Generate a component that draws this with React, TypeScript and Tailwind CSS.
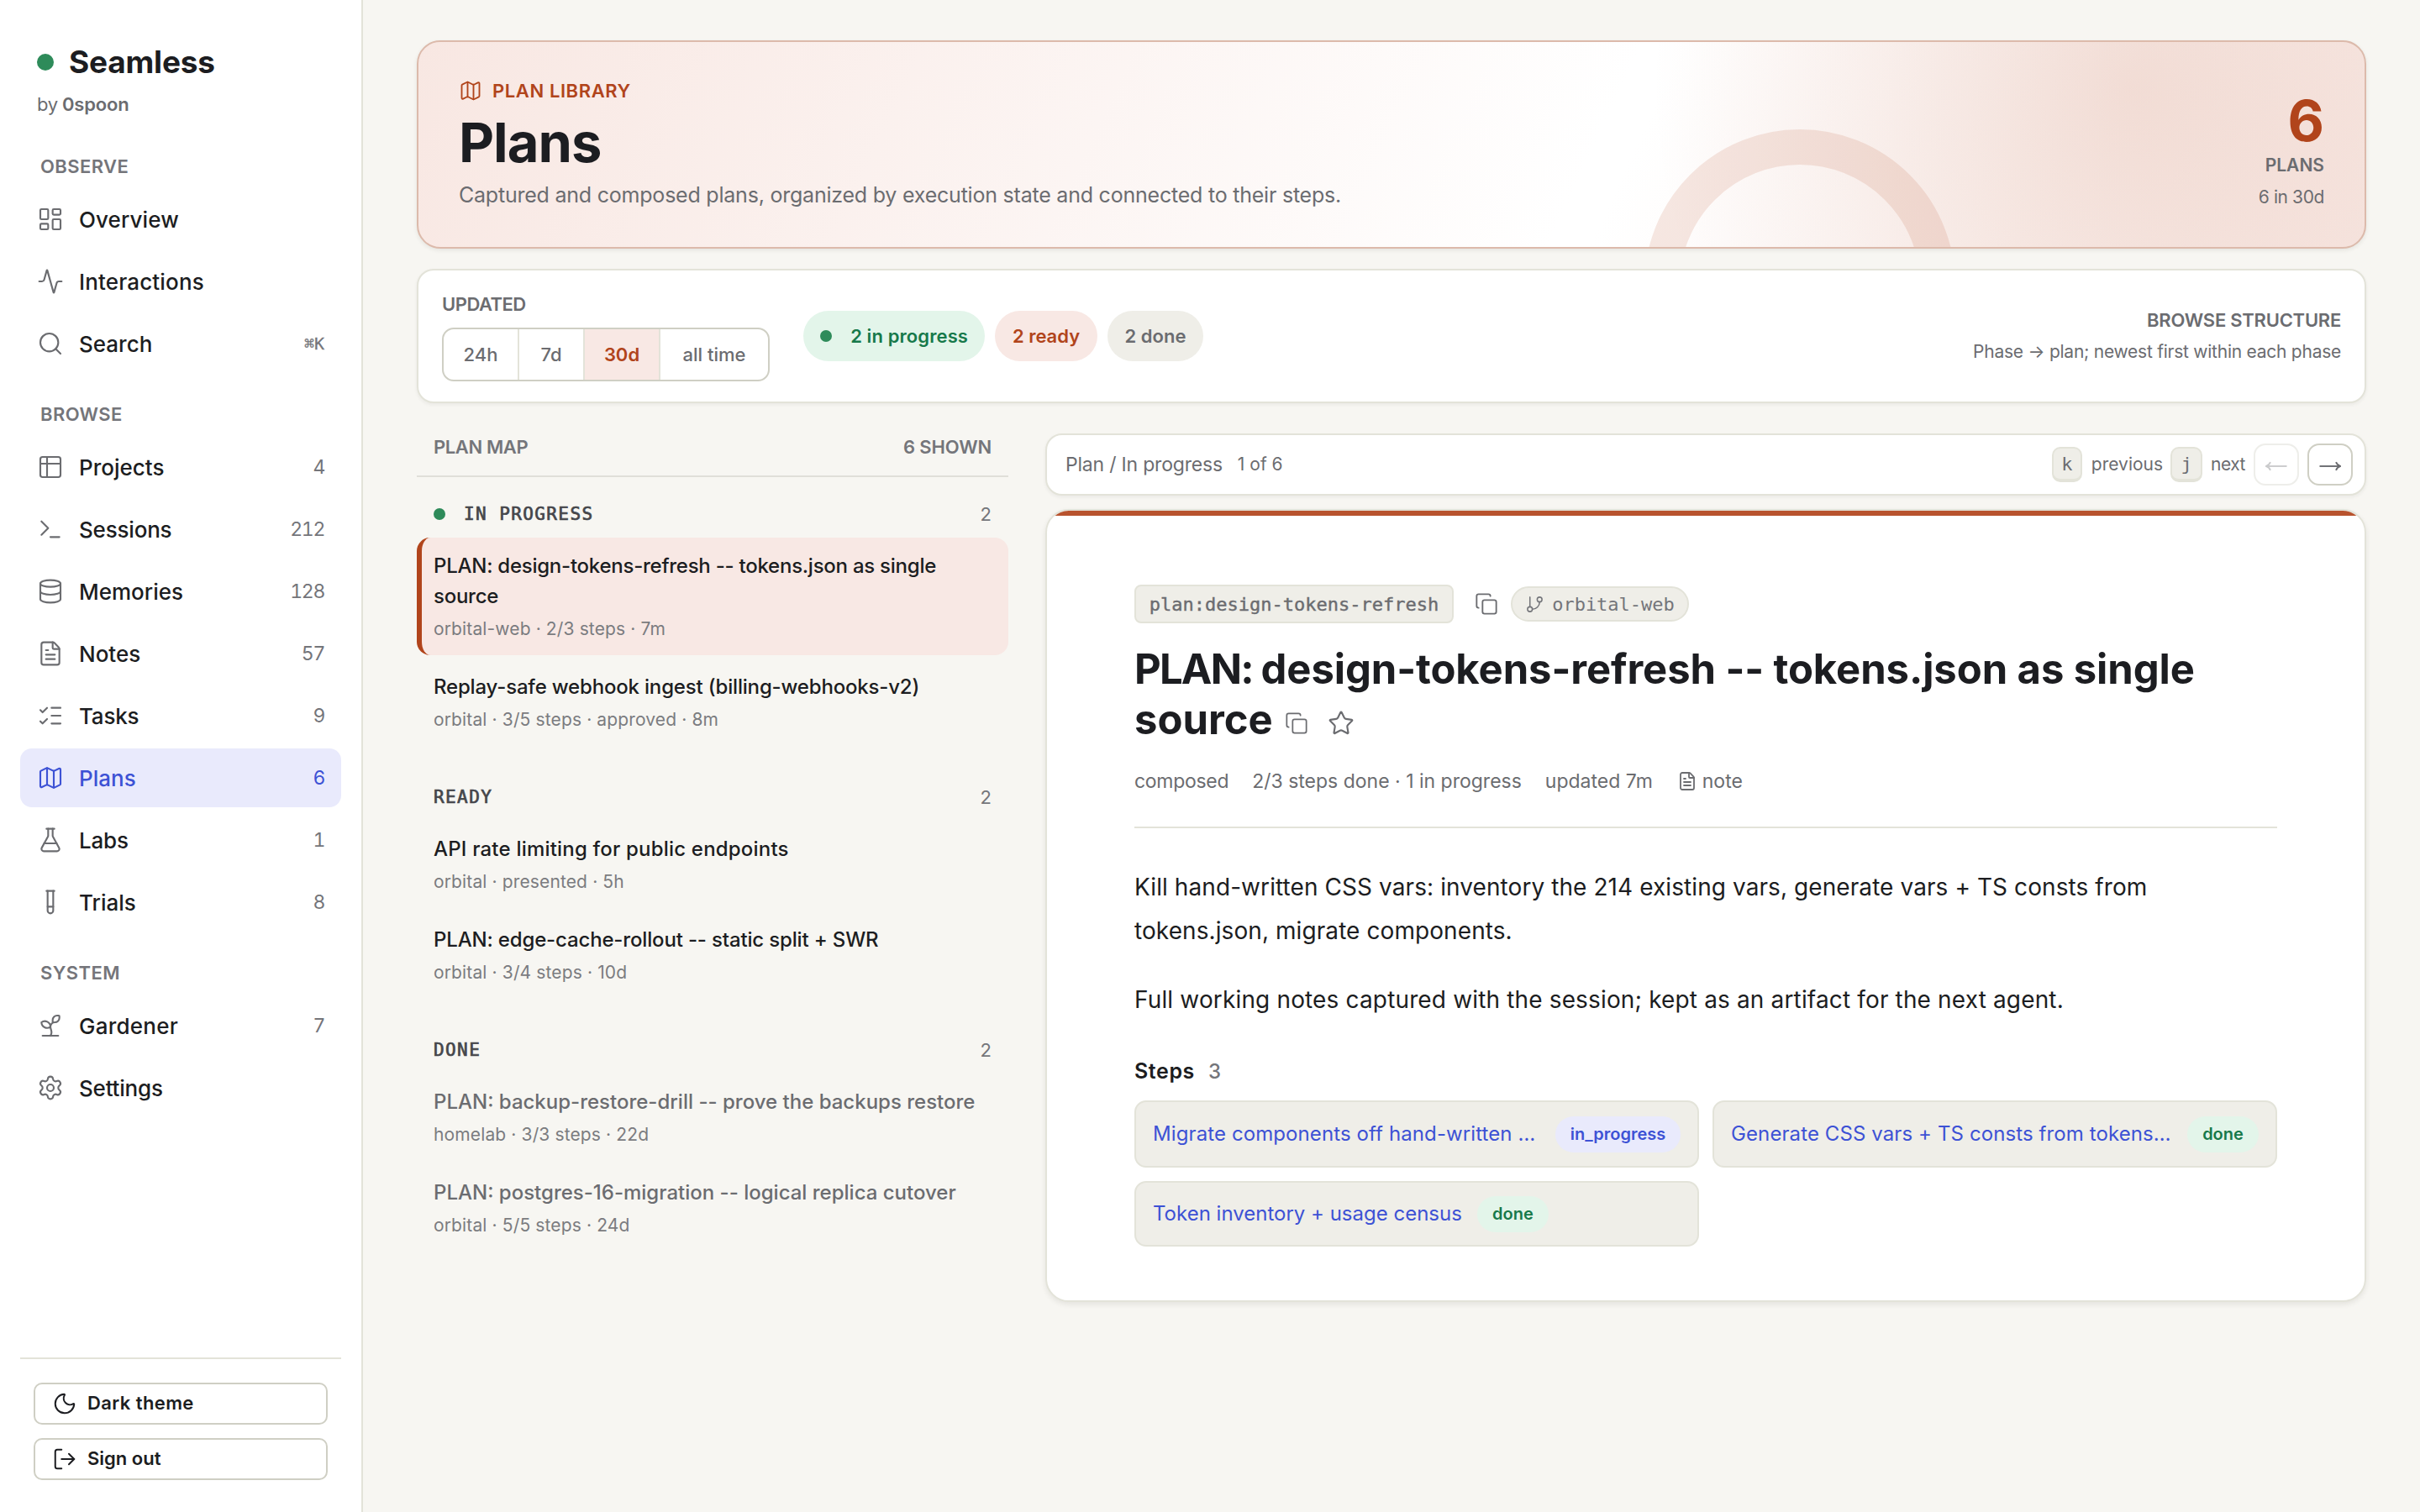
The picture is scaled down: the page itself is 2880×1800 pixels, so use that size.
import React from 'react';
import {
  Activity,
  Copy,
  Database,
  FileText,
  FlaskConical,
  GitBranch,
  LayoutDashboard,
  ListChecks,
  LogOut,
  Map as MapIcon,
  Moon,
  Search,
  Settings,
  Sprout,
  Star,
  Table2,
  Terminal,
  TestTube,
  type LucideIcon,
} from 'lucide-react';

type NavItem = { label: string; icon: LucideIcon; count?: string; active?: boolean; track?: string };

const navGroups: { title: string; items: NavItem[] }[] = [
  {
    title: 'OBSERVE',
    items: [
      { label: 'Overview', icon: LayoutDashboard, track: 'tracking-[0.1px]' },
      { label: 'Interactions', icon: Activity, track: 'tracking-[0.15px]' },
      { label: 'Search', icon: Search, count: '⌘K' },
    ],
  },
  {
    title: 'BROWSE',
    items: [
      { label: 'Projects', icon: Table2, count: '4' },
      { label: 'Sessions', icon: Terminal, count: '212', track: 'tracking-[-0.2px]' },
      { label: 'Memories', icon: Database, count: '128' },
      { label: 'Notes', icon: FileText, count: '57' },
      { label: 'Tasks', icon: ListChecks, count: '9', track: 'tracking-[-0.2px]' },
      { label: 'Plans', icon: MapIcon, count: '6', active: true },
      { label: 'Labs', icon: FlaskConical, count: '1', track: 'tracking-[-0.2px]' },
      { label: 'Trials', icon: TestTube, count: '8' },
    ],
  },
  {
    title: 'SYSTEM',
    items: [
      { label: 'Gardener', icon: Sprout, count: '7', track: 'tracking-[0.25px]' },
      { label: 'Settings', icon: Settings, track: 'tracking-[-0.2px]' },
    ],
  },
];

const planGroups = [
  {
    title: 'IN PROGRESS',
    dot: true,
    items: [
      {
        title: ['PLAN: design-tokens-refresh -- tokens.json as single', 'source'],
        meta: 'orbital-web · 2/3 steps · 7m',
        track: 'tracking-[-0.25px]',
        active: true,
      },
      {
        title: ['Replay-safe webhook ingest (billing-webhooks-v2)'],
        meta: 'orbital · 3/5 steps · approved · 8m',
        track: 'tracking-[-0.18px]',
      },
    ],
  },
  {
    title: 'READY',
    items: [
      {
        title: ['API rate limiting for public endpoints'],
        meta: 'orbital · presented · 5h',
        track: 'tracking-[0.2px]',
      },
      {
        title: ['PLAN: edge-cache-rollout -- static split + SWR'],
        meta: 'orbital · 3/4 steps · 10d',
        track: 'tracking-[-0.16px]',
      },
    ],
  },
  {
    title: 'DONE',
    muted: true,
    items: [
      { title: ['PLAN: backup-restore-drill -- prove the backups restore'], meta: 'homelab · 3/3 steps · 22d', track: '' },
      { title: ['PLAN: postgres-16-migration -- logical replica cutover'], meta: 'orbital · 5/5 steps · 24d', track: '' },
    ],
  },
];

const steps = [
  { title: 'Migrate components off hand-written …', status: 'in_progress', clipped: true },
  { title: 'Generate CSS vars + TS consts from tokens…', status: 'done', clipped: true },
  { title: 'Token inventory + usage census', status: 'done' },
];

// Thin arrow with a small head, used by the pager buttons
const PagerArrow = ({ flip = false }: { flip?: boolean }) => (
  <svg
    width="26"
    height="12"
    viewBox="0 0 26 12"
    fill="none"
    stroke="currentColor"
    strokeWidth="1.9"
    className={flip ? 'mt-1 rotate-180' : 'mt-1'}
  >
    <path d="M0.5 6H24.5" />
    <path d="M20 1.2C21 3.6 22.6 5.2 25 6C22.6 6.8 21 8.4 20 10.8" />
  </svg>
);

const Sidebar = () => (
  <aside className="flex h-[1800px] w-[432px] shrink-0 flex-col border-r-2 border-[#e3e3d9] bg-white px-6 pt-[52px] pb-[38px]">
    <div className="flex h-11 items-center gap-[18px] pl-5">
      <span className="size-5 rounded-full bg-[#2e8b5a]" />
      <span className="text-[37px] font-bold tracking-[-0.2px]">Seamless</span>
    </div>
    <div className="mt-[14px] flex h-7 items-center gap-[5px] pl-[20px] text-[22px] tracking-[-0.2px] text-[#6b6c70]">
      by <span className="font-semibold">0spoon</span>
    </div>

    <nav className="mt-[46px] flex flex-col gap-[35px]">
      {navGroups.map((group) => (
        <div key={group.title}>
          <div className="mb-[14px] flex h-7 items-center pl-6 text-[22px] font-semibold tracking-[0.4px] text-[#74757a]">
            {group.title}
          </div>
          <div className="flex flex-col gap-1">
            {group.items.map((item) => (
              <a
                key={item.label}
                className={`flex h-[70px] items-center rounded-[14px] px-5 ${item.active ? 'bg-[#e9eafc] text-[#3d52d5]' : ''}`}
              >
                <item.icon size={32} strokeWidth={1.6} className={item.active ? '' : 'text-[#6b6c70]'} />
                <span className={`ml-[18px] text-[26px] font-medium ${item.track ?? ''}`}>{item.label}</span>
                {item.count && (
                  <span
                    className={`ml-auto ${item.count === '⌘K' ? "text-[20px] [font-family:'DejaVu_Sans_Mono',monospace] [-webkit-text-stroke:0.3px]" : 'text-[23px] tracking-[-1.3px] tabular-nums'} ${item.active ? '' : 'text-[#74757a]'}`}
                  >
                    {item.count}
                  </span>
                )}
              </a>
            ))}
          </div>
        </div>
      ))}
    </nav>

    <div className="mt-auto flex flex-col gap-4 border-t-2 border-[#e3e3d9] px-4 pt-7">
      <button className="flex h-[50px] items-center gap-3 rounded-[10px] border-2 border-[#cfcfc4] px-5 text-[22px] font-semibold">
        <Moon size={30} strokeWidth={1.6} />
        <span className="mb-[2px] tracking-[0.4px]">Dark theme</span>
      </button>
      <button className="flex h-[50px] items-center gap-3 rounded-[10px] border-2 border-[#cfcfc4] px-5 text-[22px] font-semibold">
        <LogOut size={30} strokeWidth={1.6} />
        <span className="mb-[2px]">Sign out</span>
      </button>
    </div>
  </aside>
);

const Hero = () => (
  <header className="relative flex h-[248px] justify-between overflow-hidden rounded-[28px] border-2 border-[#dcbaab] bg-white bg-[radial-gradient(circle_at_88%_22%,rgba(177,68,27,0.13),transparent_28%),linear-gradient(115deg,#f8e7e2_0%,#ffffff_60%,#ffffff_62%,#f9ebe7_100%)] px-12 shadow-[0_2px_5px_rgba(40,40,30,0.09)]">
    {/* Decorative ring, cut off by the bottom edge */}
    <span className="absolute top-[104px] right-[487px] size-[370px] rounded-full border-[42px] border-[rgba(177,68,27,0.12)]" />
    <div className="relative pt-11">
      <div className="flex h-7 items-center gap-3 text-[22px] font-semibold tracking-[0.6px] text-[#b1441b]">
        <MapIcon size={28} strokeWidth={1.6} />
        PLAN LIBRARY
      </div>
      <h1 className="mt-[14px] h-[68px] text-[65px] leading-[68px] font-bold tracking-[-1px]">Plans</h1>
      <p className="mt-3 h-8 text-[25px] leading-8 tracking-[-0.22px] text-[#6b6c70]">
        Captured and composed plans, organized by execution state and connected to their steps.
      </p>
    </div>
    <div className="relative flex flex-col items-end pt-16 text-[#6b6c70]">
      <div className="h-[60px] text-[67px] leading-[60px] font-bold text-[#b1441b]">6</div>
      <div className="mt-[10px] h-[26px] text-[21px] leading-[26px] font-semibold">PLANS</div>
      <div className="mt-3 h-[26px] text-[21px] leading-[26px] tracking-[-0.4px]">6 in 30d</div>
    </div>
  </header>
);

const FilterBar = () => (
  <section className="mt-6 flex h-[160px] items-center rounded-[20px] border-2 border-[#e3e3d9] bg-white px-7 shadow-[0_2px_4px_rgba(40,40,30,0.06)]">
    <div className="pt-[2px]">
      <div className="mb-[14px] flex h-7 items-center text-[22px] font-semibold tracking-[-0.5px] text-[#6b6c70]">UPDATED</div>
      <div className="flex h-16 overflow-hidden rounded-[14px] border-2 border-[#cfcfc4] text-[22px] font-medium text-[#6b6c70]">
        <button className="w-[90px] border-r-2 border-[#e3e3d9]">24h</button>
        <button className="w-[78px] border-r-2 border-[#e3e3d9]">7d</button>
        <button className="w-[90px] border-r-2 border-[#e3e3d9] bg-[#f8e8e4] font-semibold text-[#b1441b]">30d</button>
        <button className="w-[128px]">all time</button>
      </div>
    </div>
    <div className="ml-10 flex gap-3 text-[22px] font-semibold">
      <span className="flex h-[60px] w-[216px] items-center justify-between rounded-full bg-[#e3f5ea] px-5 text-[#17794a]">
        <i className="size-[14px] rounded-full bg-[#2e8b5a]" />
        <span className="tracking-[0.1px]">2 in progress</span>
      </span>
      <span className="flex h-[60px] w-[122px] items-center justify-center rounded-full bg-[#f8e8e4] text-[#b1441b]">2 ready</span>
      <span className="flex h-[60px] w-[114px] items-center justify-center rounded-full bg-[#efeee8] text-[#6b6c70]">2 done</span>
    </div>
    <div className="ml-auto text-right leading-[38px] text-[#6b6c70]">
      <div className="text-[22px] font-semibold tracking-[-0.25px]">BROWSE STRUCTURE</div>
      <div className="text-[21px] tracking-[-0.25px]">Phase → plan; newest first within each phase</div>
    </div>
  </section>
);

const PlanMap = () => (
  <section>
    <div className="flex h-[52px] items-center justify-between border-b-2 border-[#e0dfd9] px-5 pb-[18px] text-[22px] font-semibold text-[#74757a]">
      <span className="tracking-[-0.4px]">PLAN MAP</span>
      <span className="tracking-[-0.15px]">6 SHOWN</span>
    </div>
    <div className="flex flex-col gap-[17px]">
      {planGroups.map((group) => (
        <div key={group.title}>
          <div className="flex h-[72px] items-center px-5 pt-4">
            {group.dot && <i className="mr-[22px] size-[14px] rounded-full bg-[#2e8b5a]" />}
            <span className="mt-[2px] text-[21px] tracking-[1.4px] text-[#45464b] [-webkit-text-stroke:0.7px] [font-family:'DejaVu_Sans_Mono',monospace]">
              {group.title}
            </span>
            <span className="ml-auto text-[22px] text-[#74757a]">2</span>
          </div>
          <div className="flex flex-col gap-1">
            {group.items.map((item) => (
              <a
                key={item.meta}
                className={`block rounded-[16px] border-l-[6px] pt-4 pb-[15px] pl-[14px] ${item.active ? 'border-[#b1441b] bg-[#f8e8e4]' : 'border-transparent'}`}
              >
                <div
                  className={`text-[24px] leading-9 font-medium whitespace-nowrap ${item.track} ${group.muted ? 'text-[#6b6c70]' : ''}`}
                >
                  {item.title.map((line) => (
                    <div key={line}>{line}</div>
                  ))}
                </div>
                <div className="mt-[5px] h-8 text-[21px] leading-8 tracking-[0.13px] text-[#7b7c80]">{item.meta}</div>
              </a>
            ))}
          </div>
        </div>
      ))}
    </div>
  </section>
);

const ReaderBar = () => (
  <div className="flex h-[74px] items-center rounded-[20px] border-2 border-[#e3e3d9] bg-white pr-[14px] pl-[22px] text-[#6b6c70] shadow-[0_2px_4px_rgba(40,40,30,0.06)]">
    <span className="text-[23px] tracking-[-0.2px]">Plan / In progress</span>
    <span className="ml-[18px] text-[21px]">1 of 6</span>
    <div className="ml-auto flex items-center text-[21px]">
      <kbd className="flex h-[42px] w-9 items-center justify-center rounded-[10px] border-2 border-b-4 border-[#e3e3d9] bg-[#efeee8] text-[22px] [font-family:'DejaVu_Sans_Mono',monospace]">
        k
      </kbd>
      <span className="ml-[11px]">previous</span>
      <kbd className="ml-[9px] flex h-[42px] w-[38px] items-center justify-center rounded-[10px] border-2 border-b-4 border-[#e3e3d9] bg-[#efeee8] text-[22px] [font-family:'DejaVu_Sans_Mono',monospace]">
        j
      </kbd>
      <span className="ml-[10px] tracking-[-0.5px]">next</span>
      <button className="ml-[10px] flex h-[50px] w-[54px] items-center justify-center rounded-[14px] border-2 border-[#cfcfc4] opacity-35">
        <PagerArrow flip />
      </button>
      <button className="ml-[10px] flex h-[50px] w-[54px] items-center justify-center rounded-[14px] border-2 border-[#cfcfc4]">
        <PagerArrow />
      </button>
    </div>
  </div>
);

const PlanArticle = () => (
  <article className="mt-4 overflow-hidden rounded-[28px] border-2 border-[#e3e3d9] bg-white shadow-[0_3px_6px_rgba(40,40,30,0.09)]">
    <div className="h-[6px] bg-[#b8532e]" />
    <div className="px-[104px] pt-[82px] pb-16">
      <div className="flex h-[46px] items-center text-[22px] text-[#6b6c70] [font-family:'DejaVu_Sans_Mono',monospace]">
        <code className="flex h-[46px] w-[380px] items-center justify-center rounded-[8px] border-2 border-[#e3e3d9] bg-[#efeee8] [-webkit-text-stroke:0.4px] [font-family:inherit]">
          plan:design-tokens-refresh
        </code>
        <Copy size={28} strokeWidth={1.6} className="ml-[25px]" />
        <span className="ml-[15px] flex h-[42px] w-[212px] items-center justify-center gap-[9px] rounded-full border-2 border-[#e3e3d9] bg-[#efeee8] text-[#74757a]">
          <GitBranch size={23} strokeWidth={1.6} />
          orbital-web
        </span>
      </div>

      <h2 className="mt-[25px] text-[49px] leading-[60px] font-bold whitespace-nowrap">
        <div className="tracking-[-0.1px]">
          <span className="tracking-[-1.8px]">PLAN: </span>
          design-tokens-refresh -- tokens.json as single
        </div>
        <div className="flex items-center">
          source
          <Copy size={28} strokeWidth={1.5} className="mt-2 ml-[14px] text-[#6b6c70]" />
          <Star size={32} strokeWidth={1.6} className="mt-2 ml-[23px] text-[#6b6c70]" />
        </div>
      </h2>

      <div className="mt-[27px] flex h-[72px] border-b-2 border-[#e3e3d9] text-[23px] leading-8 text-[#6b6c70]">
        <span className="tracking-[-0.3px]">composed</span>
        <span className="ml-7">2/3 steps done · 1 in progress</span>
        <span className="ml-7">updated 7m</span>
        <span className="ml-[29px] flex h-8 items-center gap-1.5">
          <FileText size={24} strokeWidth={1.8} />
          note
        </span>
      </div>

      <div className="mt-11 flex flex-col gap-[30px] text-[28px] leading-[52px] whitespace-nowrap">
        <p className="tracking-[0.08px]">
          Kill hand-written CSS vars: inventory the 214 existing vars, generate vars + TS consts from
          <br />
          tokens.json, migrate components.
        </p>
        <p className="tracking-[0.15px]">Full working notes captured with the session; kept as an artifact for the next agent.</p>
      </div>

      <div className="mt-11 flex h-8 items-center gap-4 text-[25px] font-semibold tracking-[0.6px]">
        Steps <span className="text-[24px] font-medium text-[#74757a]">3</span>
      </div>
      <div className="mt-[18px] grid grid-cols-2 grid-rows-[80px_78px] gap-4">
        {steps.map((step) => (
          <div key={step.title} className="flex items-center rounded-[14px] border-2 border-[#e3e3d9] bg-[#efeee8] px-5">
            <span className={`text-[24px] whitespace-nowrap text-[#3d52d5] ${step.clipped ? 'grow tracking-[0.1px]' : ''}`}>
              {step.title}
            </span>
            <span
              className={`ml-[18px] flex h-[43px] items-center justify-center rounded-full text-[20px] font-semibold ${
                step.status === 'done' ? 'w-[85px] bg-[#e3f5ea] text-[#17794a]' : 'w-[149px] bg-[#e9eafc] text-[#3d52d5]'
              }`}
            >
              {step.status}
            </span>
          </div>
        ))}
      </div>
    </div>
  </article>
);

export default function App() {
  return (
    <div className="flex h-[1800px] w-[2880px] overflow-hidden bg-[#f7f6f2] text-[#1c1d21] [font-family:Inter,'Liberation_Sans',sans-serif]">
      <Sidebar />
      <main className="flex-1 px-16 pt-12">
        <Hero />
        <FilterBar />
        <div className="mt-9 grid grid-cols-[704px_1fr] gap-11">
          <PlanMap />
          <section>
            <ReaderBar />
            <PlanArticle />
          </section>
        </div>
      </main>
    </div>
  );
}
